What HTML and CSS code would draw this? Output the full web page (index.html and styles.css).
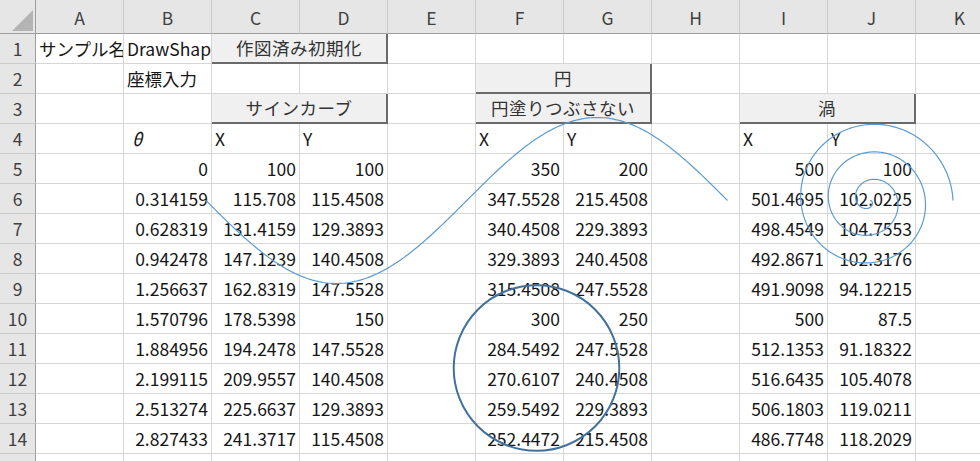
FILE: index.html
```html
<!DOCTYPE html>
<html lang="ja">
<head>
<meta charset="utf-8">
<title>DrawShape</title>
<link rel="stylesheet" href="styles.css">
</head>
<body>
<div class="sheet">
  <div class="corner"></div>
  <div class="ch">A</div><div class="ch">B</div><div class="ch">C</div><div class="ch">D</div><div class="ch">E</div><div class="ch">F</div><div class="ch">G</div><div class="ch">H</div><div class="ch">I</div><div class="ch">J</div><div class="ch">K</div>

  <div class="rh">1</div>
  <div class="c">サンプル名</div><div class="c">DrawShape</div><div class="c"></div><div class="c"></div><div class="c"></div><div class="c"></div><div class="c"></div><div class="c"></div><div class="c"></div>

  <div class="rh">2</div>
  <div class="c"></div><div class="c">座標入力</div><div class="c"></div><div class="c"></div><div class="c"></div><div class="c"></div><div class="c"></div><div class="c"></div><div class="c"></div>

  <div class="rh">3</div>
  <div class="c"></div><div class="c"></div><div class="c"></div><div class="c"></div><div class="c"></div>

  <div class="rh">4</div>
  <div class="c"></div><div class="c theta">θ</div><div class="c">X</div><div class="c">Y</div><div class="c"></div><div class="c">X</div><div class="c">Y</div><div class="c"></div><div class="c">X</div><div class="c">Y</div><div class="c"></div>

  <div class="rh">5</div>
  <div class="c"></div><div class="c n">0</div><div class="c n">100</div><div class="c n">100</div><div class="c"></div><div class="c n">350</div><div class="c n">200</div><div class="c"></div><div class="c n">500</div><div class="c n">100</div><div class="c"></div>

  <div class="rh">6</div>
  <div class="c"></div><div class="c n">0.314159</div><div class="c n">115.708</div><div class="c n">115.4508</div><div class="c"></div><div class="c n">347.5528</div><div class="c n">215.4508</div><div class="c"></div><div class="c n">501.4695</div><div class="c n">102.0225</div><div class="c"></div>

  <div class="rh">7</div>
  <div class="c"></div><div class="c n">0.628319</div><div class="c n">131.4159</div><div class="c n">129.3893</div><div class="c"></div><div class="c n">340.4508</div><div class="c n">229.3893</div><div class="c"></div><div class="c n">498.4549</div><div class="c n">104.7553</div><div class="c"></div>

  <div class="rh">8</div>
  <div class="c"></div><div class="c n">0.942478</div><div class="c n">147.1239</div><div class="c n">140.4508</div><div class="c"></div><div class="c n">329.3893</div><div class="c n">240.4508</div><div class="c"></div><div class="c n">492.8671</div><div class="c n">102.3176</div><div class="c"></div>

  <div class="rh">9</div>
  <div class="c"></div><div class="c n">1.256637</div><div class="c n">162.8319</div><div class="c n">147.5528</div><div class="c"></div><div class="c n">315.4508</div><div class="c n">247.5528</div><div class="c"></div><div class="c n">491.9098</div><div class="c n">94.12215</div><div class="c"></div>

  <div class="rh">10</div>
  <div class="c"></div><div class="c n">1.570796</div><div class="c n">178.5398</div><div class="c n">150</div><div class="c"></div><div class="c n">300</div><div class="c n">250</div><div class="c"></div><div class="c n">500</div><div class="c n">87.5</div><div class="c"></div>

  <div class="rh">11</div>
  <div class="c"></div><div class="c n">1.884956</div><div class="c n">194.2478</div><div class="c n">147.5528</div><div class="c"></div><div class="c n">284.5492</div><div class="c n">247.5528</div><div class="c"></div><div class="c n">512.1353</div><div class="c n">91.18322</div><div class="c"></div>

  <div class="rh">12</div>
  <div class="c"></div><div class="c n">2.199115</div><div class="c n">209.9557</div><div class="c n">140.4508</div><div class="c"></div><div class="c n">270.6107</div><div class="c n">240.4508</div><div class="c"></div><div class="c n">516.6435</div><div class="c n">105.4078</div><div class="c"></div>

  <div class="rh">13</div>
  <div class="c"></div><div class="c n">2.513274</div><div class="c n">225.6637</div><div class="c n">129.3893</div><div class="c"></div><div class="c n">259.5492</div><div class="c n">229.3893</div><div class="c"></div><div class="c n">506.1803</div><div class="c n">119.0211</div><div class="c"></div>

  <div class="rh">14</div>
  <div class="c"></div><div class="c n">2.827433</div><div class="c n">241.3717</div><div class="c n">115.4508</div><div class="c"></div><div class="c n">252.4472</div><div class="c n">215.4508</div><div class="c"></div><div class="c n">486.7748</div><div class="c n">118.2029</div><div class="c"></div>

  <div class="rh"></div>
  <div class="c"></div><div class="c"></div><div class="c"></div><div class="c"></div><div class="c"></div><div class="c"></div><div class="c"></div><div class="c"></div><div class="c"></div><div class="c"></div><div class="c"></div>

  <div class="btn btn-init">作図済み初期化</div>
  <div class="btn btn-circle">円</div>
  <div class="btn btn-sine">サインカーブ</div>
  <div class="btn btn-ring">円塗りつぶさない</div>
  <div class="btn btn-spiral">渦</div>

  <svg class="shapes" width="1004" height="461" viewBox="0 0 1004 461">
    <path id="sine" class="line" d=""/>
    <circle class="ring" cx="536.5" cy="368" r="82.8"/>
    <path id="spiral" class="line" d=""/>
  </svg>
</div>
<script src="script.js"></script>
</body>
</html>
```

FILE: styles.css
```css
html, body {
  margin: 0;
  padding: 0;
  background: #ffffff;
  overflow: hidden;
}

body {
  font-family: "Noto Sans CJK JP", "Noto Sans", sans-serif;
}

.sheet {
  position: relative;
  display: grid;
  grid-template-columns: 36px repeat(11, 88px);
  grid-template-rows: 34px repeat(15, 30px);
  width: 980px;
  height: 461px;
  overflow: hidden;
  font-size: 17.5px;
  color: #161616;
}

.sheet > div {
  box-sizing: border-box;
  overflow: hidden;
  white-space: nowrap;
  line-height: 1;
  display: flex;
  align-items: center;
}

.corner {
  position: relative;
  background: #e6e6e6;
  border-right: 1px solid #9e9e9e;
  border-bottom: 1px solid #9e9e9e;
}

.corner::after {
  content: "";
  position: absolute;
  left: 12px;
  top: 10px;
  width: 21px;
  height: 21px;
  background: #b4b4b4;
  clip-path: polygon(100% 0, 100% 100%, 0 100%);
}

.ch {
  background: #e6e6e6;
  border-right: 1px solid #cacaca;
  border-bottom: 1px solid #9e9e9e;
  justify-content: center;
  color: #404040;
  padding-top: 2px;
}

.rh {
  background: #e6e6e6;
  border-right: 1px solid #9e9e9e;
  border-bottom: 1px solid #cacaca;
  justify-content: center;
  color: #404040;
}

.c {
  border-right: 1px solid #d6d6d6;
  border-bottom: 1px solid #d6d6d6;
  padding: 0 3px;
}

.n {
  justify-content: flex-end;
}

.theta {
  font-style: italic;
  padding-left: 8px;
}

.btn {
  background: #f0f0f0;
  border-right: 2px solid #6a6a6a;
  border-bottom: 2px solid #6a6a6a;
  justify-content: center;
  color: #333333;
  letter-spacing: 0.5px;
}

.btn-init { grid-column: 4 / 6; grid-row: 2; }
.btn-circle { grid-column: 7 / 9; grid-row: 3; }
.btn-sine { grid-column: 4 / 6; grid-row: 4; }
.btn-ring { grid-column: 7 / 9; grid-row: 4; }
.btn-spiral { grid-column: 10 / 12; grid-row: 4; }

.shapes {
  position: absolute;
  left: 0;
  top: 0;
  pointer-events: none;
}

.line {
  fill: none;
  stroke: #5b9bd5;
  stroke-width: 1.2;
}

.ring {
  fill: none;
  stroke: #41719c;
  stroke-width: 2;
}
```

FILE: script.js
```js
(function () {
  var s = [];
  var n = 240, i, t;
  for (i = 0; i <= n; i++) {
    t = 2 * Math.PI * i / n;
    s.push((i ? "L" : "M") + (206 + 83 * t).toFixed(2) + " " + (200.5 + 83 * Math.sin(t)).toFixed(2));
  }
  document.getElementById("sine").setAttribute("d", s.join(" "));

  var p = [];
  var m = 720, r;
  for (i = 0; i <= m; i++) {
    t = 6 * Math.PI * i / m;
    r = 4.404 * t;
    p.push((i ? "L" : "M") + (870 + r * Math.cos(t)).toFixed(2) + " " + (200.5 + r * Math.sin(t)).toFixed(2));
  }
  document.getElementById("spiral").setAttribute("d", p.join(" "));
})();
```
